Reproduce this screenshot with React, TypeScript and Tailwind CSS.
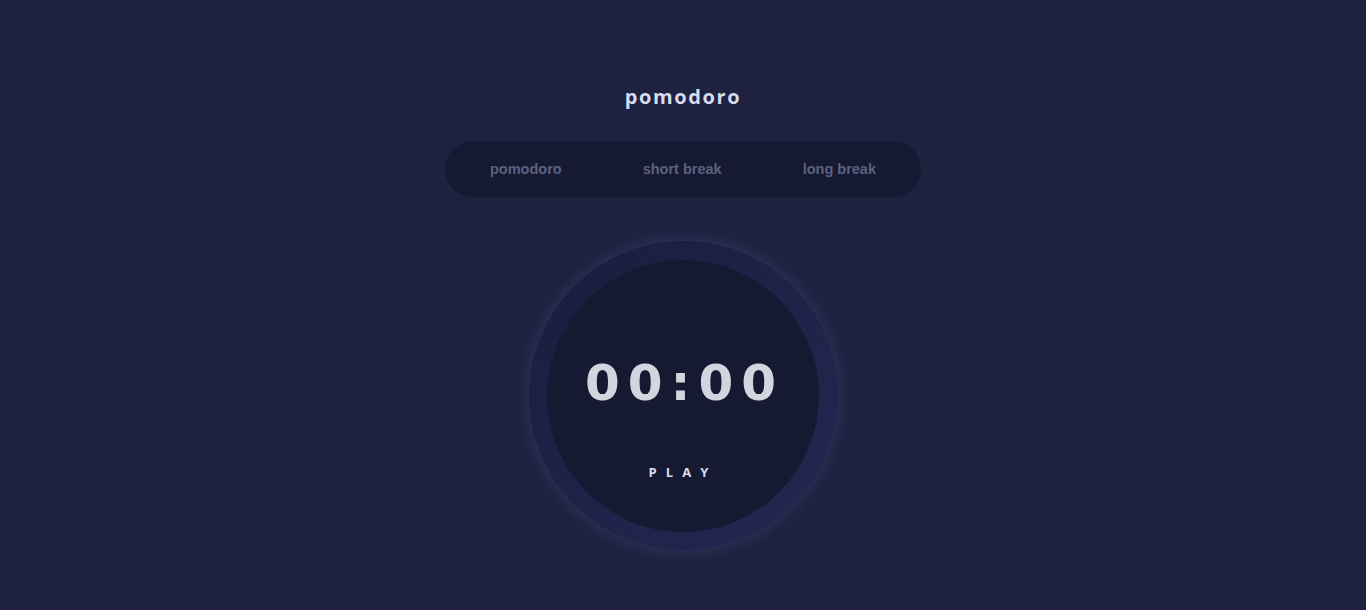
import { useState } from 'react';

const tabs = ['pomodoro', 'short break', 'long break'];

export default function App() {
  const [active] = useState<number | null>(null);

  return (
    <div className="min-h-[610px] w-full bg-[#1e2140] flex flex-col items-center">
      <h1 className="mt-[84px] text-[20px] font-bold text-[#d7dbee] tracking-[1.6px] font-['Open_Sans',sans-serif] leading-[26px]">
        pomodoro
      </h1>

      <nav className="mt-[31px] w-[476px] h-[56px] rounded-full bg-[#161932] flex items-center justify-between px-[45px]">
        {tabs.map((t, i) => (
          <button
            key={t}
            className={`mt-[2px] text-[14.5px] font-bold font-['Liberation_Sans',sans-serif] ${
              active === i ? 'text-white' : 'text-[#5d6180]'
            }`}
          >
            {t}
          </button>
        ))}
      </nav>

      <div className="mt-[44px] w-[309px] h-[309px] rounded-full bg-gradient-to-br from-[#1a1d3e] to-[#242852] flex items-center justify-center shadow-[0_0_18px_1px_rgba(75,80,125,0.45)]">
        <div className="w-[272px] h-[272px] rounded-full bg-[#161932] flex flex-col items-center">
          <div className="mt-[94px] text-[50px] leading-[58px] font-bold tracking-[8px] pl-[3px] text-[#d3d5de] font-['DejaVu_Sans',sans-serif]">
            00:00
          </div>
          <button className="mt-[51px] text-[13px] font-bold tracking-[0.7em] text-[#d7dbee] font-['Open_Sans',sans-serif]">
            PLAY
          </button>
        </div>
      </div>
    </div>
  );
}
